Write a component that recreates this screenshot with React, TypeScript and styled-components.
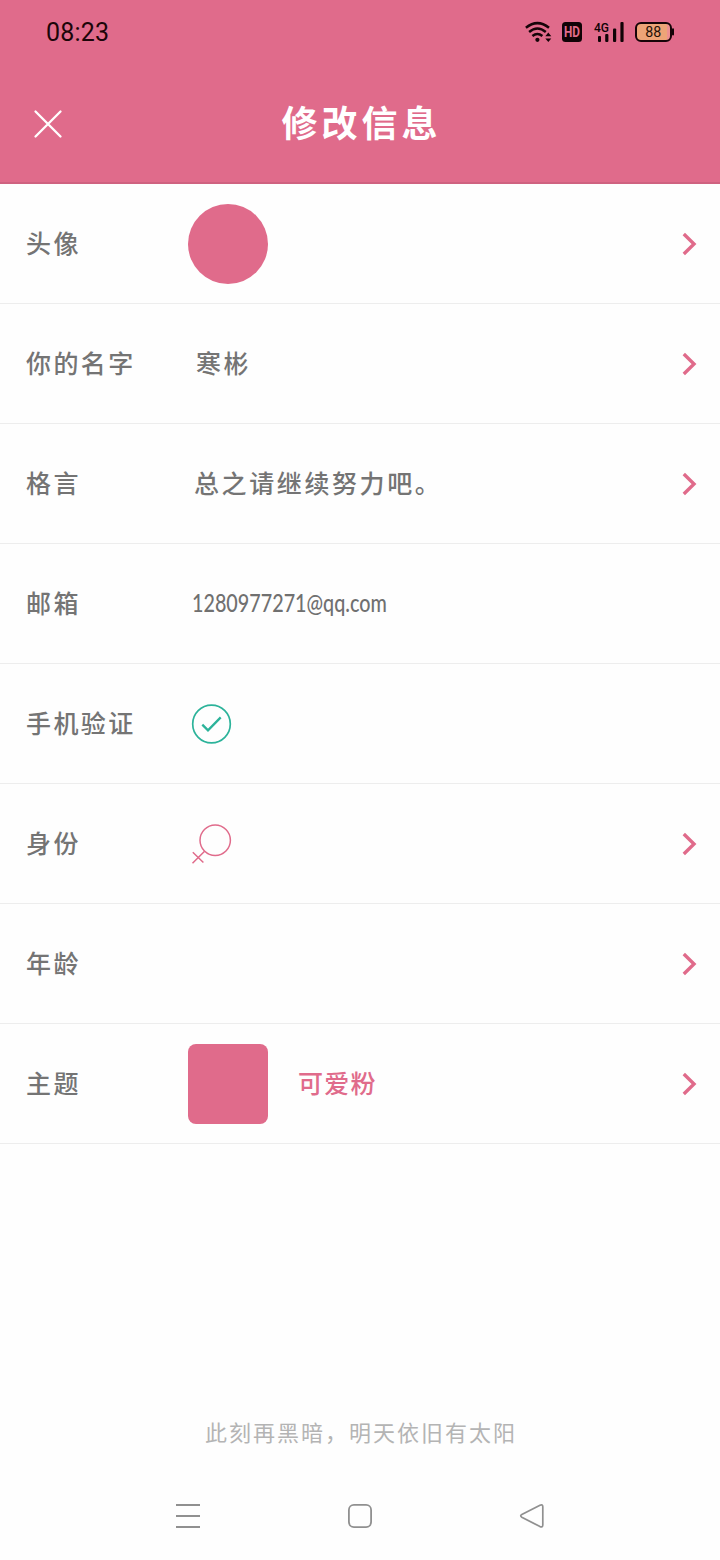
import React from 'react';
import styled, { createGlobalStyle } from 'styled-components';

const PINK = '#e06b8b';

const GlobalStyle = createGlobalStyle`
  * { box-sizing: border-box; }
  body {
    margin: 0;
    background: #fefefe;
    font-family: "Noto Sans CJK SC", "Noto Sans", sans-serif;
  }
`;

const Screen = styled.div`
  display: flex;
  flex-direction: column;
  width: 720px;
  height: 1560px;
  background: #fefefe;
  overflow: hidden;
`;

const Header = styled.header`
  height: 184px;
  background: ${PINK};
  border-bottom: 2px solid #cf6280;
`;

const StatusBar = styled.div`
  display: flex;
  align-items: center;
  justify-content: space-between;
  height: 64px;
  padding: 0 43px 0 46px;
`;

const Clock = styled.span`
  padding-top: 2px;
  font: 400 25px/30px Roboto, sans-serif;
  letter-spacing: 0.2px;
  color: #1c0509;
`;

const StatusIcons = styled.svg`
  display: block;
  width: 152px;
  height: 32px;
  font-family: Roboto, sans-serif;
`;

const TitleBar = styled.div`
  display: grid;
  grid-template-columns: 96px 1fr 96px;
  align-items: center;
  height: 120px;
`;

const CloseButton = styled.button`
  display: flex;
  justify-content: center;
  padding: 0;
  border: 0;
  background: none;
`;

const Title = styled.h1`
  margin: 0;
  padding: 0 0 7px 3px;
  font-size: 36px;
  line-height: 50px;
  font-weight: 700;
  letter-spacing: 4px;
  text-align: center;
  color: #fff;
`;

const List = styled.ul`
  margin: 0;
  padding: 0;
  list-style: none;
`;

const Row = styled.li`
  display: flex;
  align-items: center;
  height: 120px;
  padding: 0 24px 0 26px;
  border-bottom: 1px solid #ededed;
`;

const Label = styled.span`
  width: 162px;
  padding-bottom: 4px;
  font-size: 25px;
  font-weight: 500;
  letter-spacing: 2.4px;
  line-height: 36px;
  color: #747474;
`;

const Value = styled.div<{ $inset?: number }>`
  flex: 1;
  display: flex;
  align-items: center;
  padding-left: ${(p) => p.$inset ?? 0}px;
`;

const ValueText = styled.span<{ $accent?: boolean; $spacing?: number }>`
  display: block;
  padding-bottom: 4px;
  font-size: 25px;
  font-weight: 500;
  line-height: 36px;
  letter-spacing: ${(p) => p.$spacing ?? 2.6}px;
  color: ${(p) => (p.$accent ? PINK : '#747474')};
`;

const Email = styled.span`
  padding-bottom: 3px;
  font: 500 25px/30px Lato, sans-serif;
  color: #707070;
  transform: scaleX(0.79);
  transform-origin: left center;
`;

const Swatch = styled.div<{ $round?: boolean }>`
  width: 80px;
  height: 80px;
  border-radius: ${(p) => (p.$round ? '50%' : '8px')};
  background: ${PINK};
`;

const ThemeName = styled.div`
  padding-left: 30px;
`;

const Motto = styled.p`
  margin: 267px 0 0;
  padding-left: 2px;
  font-size: 22px;
  line-height: 40px;
  letter-spacing: 2px;
  text-align: center;
  color: #b4b4b4;
`;

const NavBar = styled.nav`
  display: flex;
  justify-content: space-between;
  align-items: center;
  height: 88px;
  margin-top: auto;
  padding: 0 172px;
`;

const Line = styled.svg`
  display: block;
  fill: none;
  overflow: visible;
`;

const Chevron = () => (
  <Line width="14" height="24" viewBox="0 0 14 24" stroke={PINK} strokeWidth="3.4">
    <path d="M1.8 2 12 12 1.8 22" />
  </Line>
);

const Verified = () => (
  <Line width="40" height="40" viewBox="0 0 40 40" stroke="#2cb39a">
    <circle cx="19.5" cy="20" r="18.8" strokeWidth="1.7" />
    <path d="M10.3 20.6 16 26.3 28.7 13.4" strokeWidth="2.3" />
  </Line>
);

const Female = () => (
  <Line width="40" height="40" viewBox="0 0 40 40" stroke={PINK} strokeWidth="1.5">
    <circle cx="23.2" cy="16.3" r="15.2" />
    <path d="M12.6 27.2 0.5 39.3M0.8 28.3 11.4 38.5" />
  </Line>
);

const Status = () => (
  <StatusIcons viewBox="0 0 152 32">
    <g fill="none" stroke="#160408" strokeWidth="2.5">
      <path d="M.9 11.8Q12.4 2.5 24 11.8" />
      <path d="M4.1 16Q12.4 9 20.8 16" />
      <path d="M7.4 20Q12.4 16 17.4 20" />
    </g>
    <circle cx="12.4" cy="23.8" r="2.1" fill="#160408" />
    <path d="m20.3 20.2 3-3.7 3 3.7zM20.3 22.4l3 3.7 3-3.7z" fill="#160408" />
    <rect x="37" y="6" width="20" height="20" rx="3.5" fill="#100306" />
    <text x="47" y="21" textAnchor="middle" fontSize="14.5" fontWeight="700" fill={PINK} textLength="16" lengthAdjust="spacingAndGlyphs">HD</text>
    <text x="69" y="16" fontSize="13" fontWeight="500" fill="#100306" textLength="15" lengthAdjust="spacingAndGlyphs">4G</text>
    <g fill="#100306">
      <rect x="73" y="20" width="3" height="6" rx="1" />
      <rect x="80.2" y="18" width="3.2" height="8" rx="1" />
      <rect x="88" y="12.5" width="3.2" height="13.5" rx="1" />
      <rect x="95.4" y="6" width="3.2" height="20" rx="1" />
      <rect x="147" y="12.3" width="2" height="7.2" rx="1" />
    </g>
    <rect x="111" y="7" width="35" height="18" rx="5" fill="#ee9090" />
    <path d="M116 7h26v18h-26a5 5 0 0 1-5-5v-8a5 5 0 0 1 5-5z" fill="#eda477" />
    <rect x="111" y="7" width="35" height="18" rx="5" fill="none" stroke="#160408" strokeWidth="2" />
    <text x="128.3" y="21.2" textAnchor="middle" fontSize="14.5" fill="#241108" textLength="16" lengthAdjust="spacingAndGlyphs">88</text>
  </StatusIcons>
);

interface Item {
  label: string;
  content?: React.ReactNode;
  inset?: number;
  editable?: boolean;
}

const items: Item[] = [
  { label: '头像', content: <Swatch $round />, editable: true },
  { label: '你的名字', content: <ValueText>寒彬</ValueText>, inset: 8, editable: true },
  { label: '格言', content: <ValueText $spacing={2.6}>总之请继续努力吧。</ValueText>, inset: 6, editable: true },
  { label: '邮箱', content: <Email>1280977271@qq.com</Email>, inset: 4 },
  { label: '手机验证', content: <Verified />, inset: 4 },
  { label: '身份', content: <Female />, inset: 4, editable: true },
  { label: '年龄', editable: true },
  {
    label: '主题',
    content: (
      <>
        <Swatch />
        <ThemeName>
          <ValueText $accent $spacing={1.2}>可爱粉</ValueText>
        </ThemeName>
      </>
    ),
    editable: true,
  },
];

export default function App() {
  return (
    <Screen>
      <GlobalStyle />
      <Header>
        <StatusBar>
          <Clock>08:23</Clock>
          <Status />
        </StatusBar>
        <TitleBar>
          <CloseButton aria-label="关闭">
            <Line width="28" height="28" viewBox="0 0 28 28" stroke="#fff" strokeWidth="2.3" strokeLinecap="round">
              <path d="M1.5 1.5 26.5 26.5M26.5 1.5 1.5 26.5" />
            </Line>
          </CloseButton>
          <Title>修改信息</Title>
        </TitleBar>
      </Header>
      <List>
        {items.map((item) => (
          <Row key={item.label}>
            <Label>{item.label}</Label>
            <Value $inset={item.inset}>{item.content}</Value>
            {item.editable && <Chevron />}
          </Row>
        ))}
      </List>
      <Motto>此刻再黑暗，明天依旧有太阳</Motto>
      <NavBar>
        <Line width="32" height="32" viewBox="0 0 32 32" stroke="#909090" strokeWidth="2">
          <path d="M4 5h24M4 16h24M4 27h24" />
        </Line>
        <Line width="32" height="32" viewBox="0 0 32 32" stroke="#909090" strokeWidth="1.8">
          <rect x="4.9" y="4.9" width="22.2" height="22.2" rx="5" />
        </Line>
        <Line width="32" height="32" viewBox="0 0 32 32" stroke="#909090" strokeWidth="1.7" strokeLinejoin="round">
          <path d="M5.8 14.5 24 5.2Q26.8 4 26.8 6.8V25Q26.8 27.8 24 26.6L5.8 17.2Q3.6 15.8 5.8 14.5Z" />
        </Line>
      </NavBar>
    </Screen>
  );
}
